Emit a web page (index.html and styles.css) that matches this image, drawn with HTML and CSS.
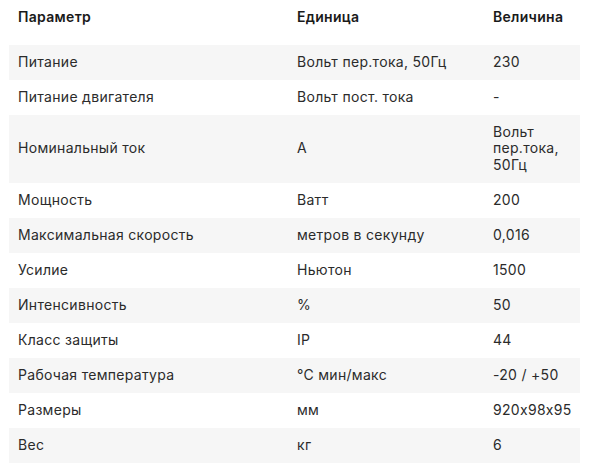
FILE: index.html
```html
<!DOCTYPE html>
<html lang="ru">
<head>
<meta charset="utf-8">
<link rel="stylesheet" href="styles.css">
</head>
<body>
<table class="specs">
  <colgroup>
    <col class="c1"><col class="c2"><col class="c3">
  </colgroup>
  <thead>
    <tr><th>Параметр</th><th>Единица</th><th>Величина</th></tr>
  </thead>
  <tbody>
    <tr><td>Питание</td><td>Вольт пер.тока, 50Гц</td><td>230</td></tr>
    <tr><td>Питание двигателя</td><td>Вольт пост. тока</td><td>-</td></tr>
    <tr><td>Номинальный ток</td><td>A</td><td>Вольт пер.тока, 50Гц</td></tr>
    <tr><td>Мощность</td><td>Ватт</td><td>200</td></tr>
    <tr><td>Максимальная скорость</td><td>метров в секунду</td><td>0,016</td></tr>
    <tr><td>Усилие</td><td>Ньютон</td><td>1500</td></tr>
    <tr><td>Интенсивность</td><td>%</td><td>50</td></tr>
    <tr><td>Класс защиты</td><td>IP</td><td>44</td></tr>
    <tr><td>Рабочая температура</td><td>°C мин/макс</td><td>-20 / +50</td></tr>
    <tr><td>Размеры</td><td>мм</td><td>920x98x95</td></tr>
    <tr><td>Вес</td><td>кг</td><td>6</td></tr>
  </tbody>
</table>
</body>
</html>
```

FILE: styles.css
```css
html, body {
  margin: 0;
  padding: 0;
  background: #ffffff;
}

body {
  padding: 0 10px 0 9px;
  font-family: "Inter", "Noto Sans", sans-serif;
  font-size: 14px;
  letter-spacing: 0.3px;
  font-feature-settings: "calt" 0;
  color: #2b2b2b;
}

.specs {
  width: 571px;
  border-collapse: collapse;
  table-layout: fixed;
}

.c1 { width: 279px; }
.c2 { width: 196px; }
.c3 { width: 96px; }

.specs th {
  text-align: left;
  font-weight: 600;
  color: #1a1a1a;
  padding: 9px 9px 19px;
  line-height: 16.5px;
  vertical-align: middle;
}

.specs td {
  padding: 9.25px 9px;
  line-height: 16.5px;
  vertical-align: middle;
}

.specs tbody tr:nth-child(odd) td {
  background: #f6f6f6;
}
```
